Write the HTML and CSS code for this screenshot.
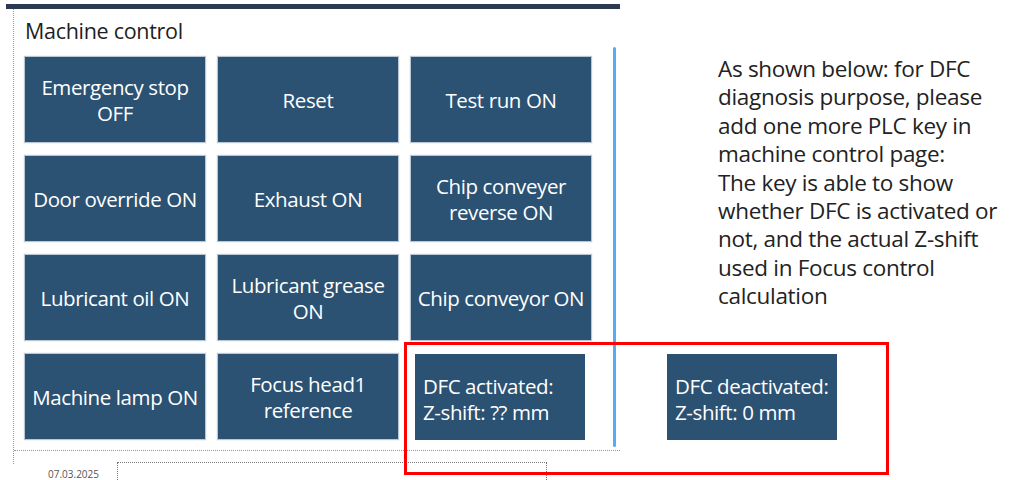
FILE: index.html
```html
<!DOCTYPE html>
<html lang="en">
<head>
    <meta charset="UTF-8">
    <title>Machine control - DFC key</title>
    <link rel="stylesheet" href="styles.css">
</head>
<body>
    <div class="slide">
        <div class="left">
            <div class="top-bar"></div>
            <div class="panel">
                <div class="panel-body">
                    <h1 class="panel-title">Machine control</h1>
                    <div class="keys">
                        <div class="key">Emergency stop<br>OFF</div>
                        <div class="key">Reset</div>
                        <div class="key">Test run ON</div>
                        <div class="key">Door override ON</div>
                        <div class="key">Exhaust ON</div>
                        <div class="key">Chip conveyer<br>reverse ON</div>
                        <div class="key">Lubricant oil ON</div>
                        <div class="key">Lubricant grease<br>ON</div>
                        <div class="key">Chip conveyor ON</div>
                        <div class="key">Machine lamp ON</div>
                        <div class="key">Focus head1<br>reference</div>
                        <div class="key key-new">DFC activated:<br>Z-shift: ?? mm</div>
                    </div>
                    <div class="scrollbar"></div>
                </div>
            </div>
            <div class="footer">
                <span class="date">07.03.2025</span>
                <div class="footer-box"></div>
            </div>
        </div>

        <p class="note">
            As shown below: for DFC diagnosis purpose, please add one more PLC key in machine control page:<br>
            The key is able to show whether DFC is activated or not, and the actual Z-shift used in Focus control calculation
        </p>

        <div class="key key-new key-off">DFC deactivated:<br>Z-shift: 0 mm</div>
        <div class="highlight"></div>
    </div>
</body>
</html>
```

FILE: styles.css
```css
* {
    margin: 0;
    padding: 0;
    box-sizing: border-box;
}

body {
    background: #ffffff;
    font-family: 'Open Sans', 'Noto Sans', sans-serif;
    color: #222222;
    overflow: hidden;
}

.slide {
    position: relative;
    width: 1009px;
    height: 480px;
    display: flex;
}

.left {
    width: 620px;
    flex-shrink: 0;
}

.top-bar {
    margin: 4px 0 0 6px;
    height: 5px;
    background: #2b3a50;
}

.panel {
    margin-left: 13px;
    height: 455px;
    border-left: 1px dotted #9a9a9a;
}

.panel-body {
    position: relative;
    height: 442px;
    padding: 8px 0 0 11px;
    border-bottom: 1px dotted #9a9a9a;
}

.panel-title {
    font-size: 21.5px;
    font-weight: 400;
    line-height: 28px;
    height: 40px;
    color: #1e1e1e;
    letter-spacing: -0.3px;
}

.keys {
    display: grid;
    grid-template-columns: repeat(3, 180px);
    grid-auto-rows: 85px;
    column-gap: 13px;
    row-gap: 14px;
}

.key {
    background: #2b5273;
    color: #ffffff;
    font-size: 20.5px;
    line-height: 26px;
    letter-spacing: -0.4px;
    display: flex;
    align-items: center;
    justify-content: center;
    text-align: center;
    box-shadow: 0 0 1px 1px rgba(130, 155, 180, 0.55);
}

.key-new {
    width: 170px;
    height: 86px;
    margin-left: 4px;
    justify-content: flex-start;
    text-align: left;
    padding: 4px 0 0 8px;
    box-shadow: none;
    white-space: nowrap;
}

.scrollbar {
    position: absolute;
    left: 599px;
    top: 38px;
    width: 3px;
    height: 400px;
    border-radius: 2px;
    background: #58aaf4;
}

.footer {
    display: flex;
    align-items: flex-start;
    padding-left: 48px;
    margin-top: -2px;
}

.date {
    font-size: 10px;
    line-height: 12px;
    color: #555555;
    margin-top: 6px;
    width: 69px;
}

.footer-box {
    width: 430px;
    height: 30px;
    border: 1px dotted #777777;
}

.note {
    margin: 55px 0 0 98px;
    font-size: 22.5px;
    line-height: 28.4px;
    color: #222222;
    width: 291px;
    letter-spacing: -0.3px;
}

.key-off {
    position: absolute;
    left: 667px;
    top: 354px;
    margin: 0;
}

.highlight {
    position: absolute;
    left: 404px;
    top: 342px;
    width: 485px;
    height: 133px;
    border: 3px solid #ff0000;
}
```
